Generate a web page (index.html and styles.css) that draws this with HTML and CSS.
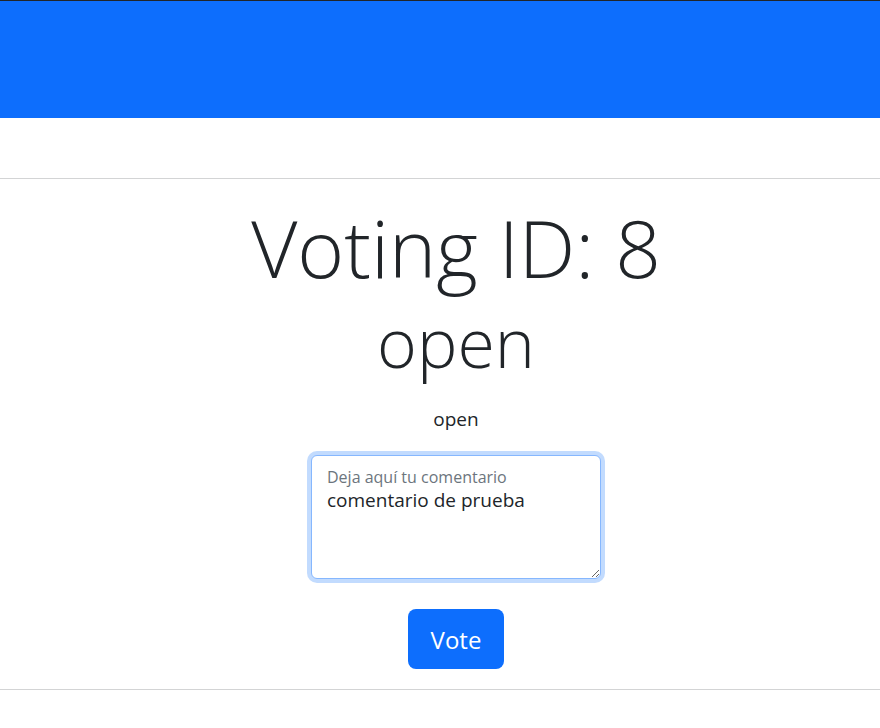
FILE: index.html
```html
<!DOCTYPE html>
<html lang="es">
<head>
<meta charset="utf-8">
<title>Voting</title>
<link rel="stylesheet" href="styles.css">
</head>
<body>
<header class="topbar"></header>
<div class="spacer"></div>
<hr class="rule">
<main class="content">
  <h1 class="title">Voting ID: 8</h1>
  <h2 class="status">open</h2>
  <p class="state">open</p>
  <form class="vote-form">
    <div class="floating">
      <textarea class="comment" id="comment">comentario de prueba</textarea>
      <label class="float-label" for="comment">Deja aquí tu comentario</label>
    </div>
    <button type="button" class="btn-vote">Vote</button>
  </form>
</main>
<hr class="rule rule-bottom">
</body>
</html>
```
FILE: styles.css
```css
* { box-sizing: border-box; }
html, body { margin: 0; padding: 0; background: #fff; }
body {
  font-family: "Open Sans", "Noto Sans", sans-serif;
  color: #212529;
  font-size: 16px;
  line-height: 1.5;
}
.topbar {
  height: 118px;
  background: #0d6efd;
  border-top: 1px solid #212529;
}
.spacer { height: 60px; }
.rule {
  margin: 0;
  border: 0;
  border-top: 1px solid #d3d4d5;
}
.content {
  display: flex;
  flex-direction: column;
  align-items: center;
  padding: 20px 0 20px 32px;
}
.title {
  margin: 0;
  font-weight: 300;
  font-size: 80px;
  line-height: 96px;
}
.status {
  margin: 0;
  font-weight: 300;
  font-size: 68px;
  line-height: 93px;
}
.state {
  margin: 17px 0 22px;
  font-size: 19px;
  line-height: 28px;
}
.vote-form {
  display: flex;
  flex-direction: column;
  align-items: center;
}
.floating { position: relative; }
.comment {
  display: block;
  width: 290px;
  height: 124px;
  padding: 33px 15px 10px;
  border: 1px solid #86b7fe;
  border-radius: 6px;
  box-shadow: 0 0 0 4px rgba(13,110,253,.25);
  font-family: "Open Sans", "Noto Sans", sans-serif;
  font-size: 19px;
  line-height: 1.25;
  color: #212529;
  resize: vertical;
  outline: none;
}
.float-label {
  position: absolute;
  top: 10px;
  left: 16px;
  font-size: 16px;
  line-height: 24px;
  color: #6c757d;
}
.btn-vote {
  margin-top: 30px;
  width: 96px;
  height: 60px;
  border: 0;
  border-radius: 8px;
  background: #0d6efd;
  color: #fff;
  font-family: "Open Sans", "Noto Sans", sans-serif;
  font-size: 24px;
}
```
